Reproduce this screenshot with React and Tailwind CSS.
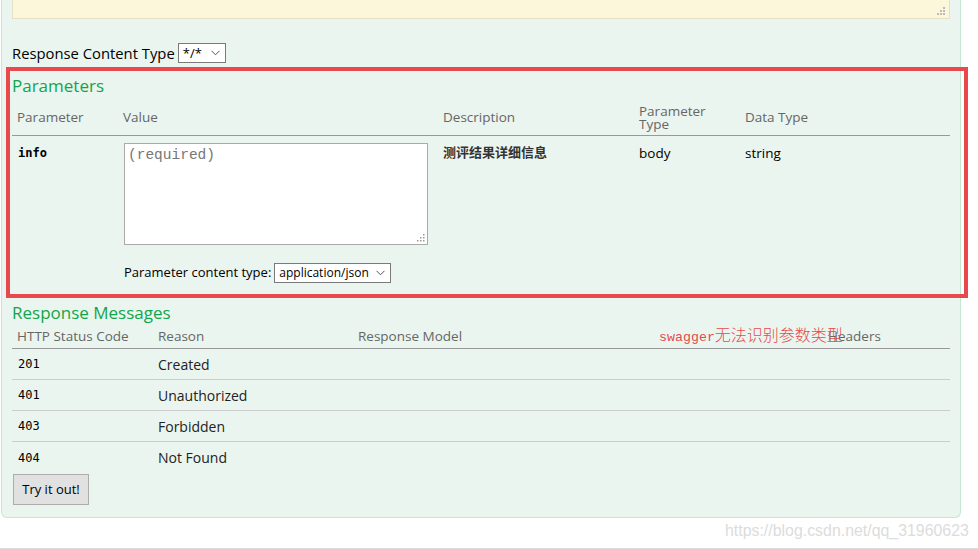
import React from "react";

function Chevron() {
  return (
    <svg width="9" height="6" viewBox="0 0 9 6" className="shrink-0">
      <path d="M0.5 0.8 L4.5 4.8 L8.5 0.8" fill="none" stroke="#555" strokeWidth="1" />
    </svg>
  );
}

function FakeSelect({ value, className, textClass }) {
  return (
    <div className={"flex items-center justify-between bg-white border border-[#7a7a7a] h-[20px] pl-[4px] pr-[5px] text-black " + className}>
      <span className={"leading-none " + textClass}>{value}</span>
      <Chevron />
    </div>
  );
}

export default function App() {
  const responses = [
    ["201", "Created"],
    ["401", "Unauthorized"],
    ["403", "Forbidden"],
    ["404", "Not Found"],
  ];
  return (
    <div className="relative w-[978px] h-[549px] overflow-hidden bg-white font-['Open_Sans','Noto_Sans_CJK_SC',sans-serif]">
      <div className="ml-[1px] w-[960px] bg-[#ebf5ef] border-x border-b border-[#c3e8d1] rounded-b-[6px] pl-[10px] pr-[10px] pb-[12px]">
        {/* yellow response body box */}
        <div className="relative h-[19px] bg-[#fcf6db] border-x border-b border-[#e5e0c6]">
          <svg width="8" height="8" viewBox="0 0 8 8" className="absolute right-[4px] bottom-[3px]">
            <rect x="6" y="0" width="2" height="2" fill="#bbb" />
            <rect x="3" y="3" width="2" height="2" fill="#bbb" />
            <rect x="6" y="3" width="2" height="2" fill="#bbb" />
            <rect x="0" y="6" width="2" height="2" fill="#bbb" />
            <rect x="3" y="6" width="2" height="2" fill="#bbb" />
            <rect x="6" y="6" width="2" height="2" fill="#bbb" />
          </svg>
        </div>

        {/* response content type */}
        <div className="mt-[24px] flex items-center h-[20px]">
          <span className="text-[14.8px] text-black mr-[3px]">Response Content Type</span>
          <FakeSelect value="*/*" className="w-[48px]" textClass="text-[13px]" />
        </div>

        {/* Parameters */}
        <div className="mt-[12px] h-[22px] flex items-center text-[17px] text-[#10a54a]">Parameters</div>
        <div className="grid grid-cols-[106px_320px_196px_106px_1fr] h-[39px] pt-[3px] items-center border-b border-[#999] text-[13.5px] text-[#666]">
          <div className="pl-[5px]">Parameter</div>
          <div className="pl-[5px]">Value</div>
          <div className="pl-[5px]">Description</div>
          <div className="pl-[5px] leading-[13px]">Parameter<br />Type</div>
          <div className="pl-[5px]">Data Type</div>
        </div>
        <div className="grid grid-cols-[106px_320px_196px_106px_1fr] pt-[7px] text-[13.5px]">
          <div className="pl-[6px] pt-[1px] font-['DejaVu_Sans_Mono',monospace] font-bold text-[12px] text-black">info</div>
          <div className="pl-[6px]">
            <div className="relative w-[304px] h-[102px] bg-white border border-[#aaa] pl-[3px] pt-[1px] font-['Liberation_Mono',monospace] text-[14.5px] text-[#777]">
              (required)
              <svg width="8" height="8" viewBox="0 0 8 8" className="absolute right-[2px] bottom-[2px]">
                <rect x="6" y="0" width="1.5" height="1.5" fill="#999" />
                <rect x="3" y="3" width="1.5" height="1.5" fill="#999" />
                <rect x="6" y="3" width="1.5" height="1.5" fill="#999" />
                <rect x="0" y="6" width="1.5" height="1.5" fill="#999" />
                <rect x="3" y="6" width="1.5" height="1.5" fill="#999" />
                <rect x="6" y="6" width="1.5" height="1.5" fill="#999" />
              </svg>
            </div>
            <div className="mt-[18px] flex items-center h-[20px]">
              <span className="text-[13px] text-black mr-[3px]">Parameter content type:</span>
              <FakeSelect value="application/json" className="w-[117px]" textClass="text-[12px]" />
            </div>
          </div>
          <div className="pl-[5px] font-bold text-[13px] text-[#333]">测评结果详细信息</div>
          <div className="pl-[5px] text-black">body</div>
          <div className="pl-[5px] text-black">string</div>
        </div>

        {/* Response Messages */}
        <div className="mt-[19px] h-[22px] flex items-center text-[17px] text-[#10a54a]">Response Messages</div>
        <div className="grid grid-cols-[141px_200px_470px_1fr] h-[25px] items-center border-b border-[#999] text-[13.5px] text-[#666]">
          <div className="pl-[5px]">HTTP Status Code</div>
          <div className="pl-[5px]">Reason</div>
          <div className="pl-[5px]">Response Model</div>
          <div className="pl-[5px]">Headers</div>
        </div>
        {responses.map(([code, reason], i) => (
          <div
            key={code}
            className={
              "grid grid-cols-[141px_200px_470px_1fr] h-[31px] items-center " +
              (i < responses.length - 1 ? "border-b border-[#ccc]" : "")
            }
          >
            <div className="pl-[6px] font-['DejaVu_Sans_Mono',monospace] text-[12px] text-black">{code}</div>
            <div className="pl-[5px] text-[14px] text-[#222]">{reason}</div>
            <div />
            <div />
          </div>
        ))}
        <button className="ml-[1px] mt-[1px] w-[76px] h-[31px] bg-[#e1e1e1] border border-[#adadad] text-[13px] text-black">
          Try it out!
        </button>
      </div>
      <div className="mt-[30px] h-px bg-[#ddd]" />

      {/* annotation overlays */}
      <div className="absolute left-[6px] top-[67px] w-[962px] h-[231px] border-[4px] border-[#e8494c] pointer-events-none" />
      <div className="absolute left-[659px] top-[322px] flex items-baseline text-[#e8494c]">
        <span className="font-['Liberation_Mono',monospace] text-[13.3px]">swagger</span>
        <span className="font-['Noto_Sans_CJK_SC',sans-serif] text-[16px] font-light">无法识别参数类型</span>
      </div>
      <div className="absolute left-[725px] top-[519px] font-['Liberation_Sans',sans-serif] text-[15.9px] text-[#dcdcdc] whitespace-nowrap">
        https://blog.csdn.net/qq_31960623
      </div>
    </div>
  );
}
